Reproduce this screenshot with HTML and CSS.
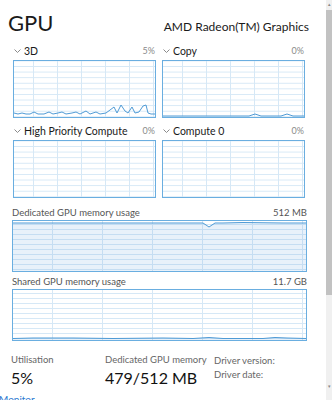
FILE: index.html
```html
<!DOCTYPE html>
<html lang="en">
  <head>
    <meta charset="UTF-8" />
    <title>GPU</title>
    <link rel="stylesheet" href="styles.css">
  </head>
  <body>
    <div class="window">
      <div class="page">
        <div class="head">
          <h1 class="title">GPU</h1>
          <span class="adapter">AMD Radeon(TM) Graphics</span>
        </div>

        <!-- engine graphs -->
        <div class="engines">
          <div class="engine">
            <div class="engine-head">
              <span class="engine-name"><svg class="chev" viewBox="0 0 7 4"><path d="M0.5 0.5 L3.5 3.5 L6.5 0.5" /></svg>3D</span>
              <span class="pct">5%</span>
            </div>
            <div class="chart">
              <svg class="plot" viewBox="0 0 141 56" preserveAspectRatio="none">
                <polyline points="0,52 4,53 8,52 12,53 16,53 20,51 24,53 30,53 35,51 39,53 44,52 48,51 52,53 58,52 62,51 66,53 72,50 76,53 82,51 86,53 92,52 96,49 100,46 103,52 107,44 111,50 114,52 118,46 121,52 125,51 129,45 132,44 134,52 137,53 141,53" />
              </svg>
            </div>
          </div>
          <div class="engine">
            <div class="engine-head">
              <span class="engine-name"><svg class="chev" viewBox="0 0 7 4"><path d="M0.5 0.5 L3.5 3.5 L6.5 0.5" /></svg>Copy</span>
              <span class="pct">0%</span>
            </div>
            <div class="chart">
              <svg class="plot" viewBox="0 0 141 56" preserveAspectRatio="none">
                <polyline points="0,55 86,55 89,54 92,53 95,54 98,55 118,55 121,54 124,53 127,54 130,55 141,55" />
              </svg>
            </div>
          </div>
          <div class="engine">
            <div class="engine-head">
              <span class="engine-name"><svg class="chev" viewBox="0 0 7 4"><path d="M0.5 0.5 L3.5 3.5 L6.5 0.5" /></svg>High Priority Compute</span>
              <span class="pct">0%</span>
            </div>
            <div class="chart"></div>
          </div>
          <div class="engine">
            <div class="engine-head">
              <span class="engine-name"><svg class="chev" viewBox="0 0 7 4"><path d="M0.5 0.5 L3.5 3.5 L6.5 0.5" /></svg>Compute 0</span>
              <span class="pct">0%</span>
            </div>
            <div class="chart"></div>
          </div>
        </div>

        <!-- memory graphs -->
        <div class="mem">
          <div class="mem-head">
            <span>Dedicated GPU memory usage</span>
            <span>512 MB</span>
          </div>
          <div class="chart wide">
            <svg class="plot" viewBox="0 0 293 50" preserveAspectRatio="none">
              <polygon class="fill" points="0,2 180,2 186,2 190,2 196,6 202,2 210,2 230,1.5 270,2 293,2 293,50 0,50" />
              <polyline points="0,2 180,2 186,2 190,2 196,6 202,2 210,2 230,1.5 270,2 293,2" />
            </svg>
          </div>
        </div>
        <div class="mem">
          <div class="mem-head">
            <span>Shared GPU memory usage</span>
            <span>11.7 GB</span>
          </div>
          <div class="chart wide">
            <svg class="plot" viewBox="0 0 293 50" preserveAspectRatio="none">
              <polygon class="fill" points="0,48.5 20,48 60,48 100,48.5 150,48 180,48.5 196,47.5 210,48.5 250,48.5 262,47.5 274,48 293,48.5 293,50 0,50" />
              <polyline points="0,48.5 20,48 60,48 100,48.5 150,48 180,48.5 196,47.5 210,48.5 250,48.5 262,47.5 274,48 293,48.5" />
            </svg>
          </div>
        </div>

        <!-- stats -->
        <div class="stats">
          <div class="stat">
            <span class="stat-label">Utilisation</span>
            <span class="stat-value">5%</span>
          </div>
          <div class="stat">
            <span class="stat-label">Dedicated GPU memory</span>
            <span class="stat-value">479/512 MB</span>
          </div>
          <div class="driver">
            <span>Driver version:</span>
            <span>Driver date:</span>
          </div>
        </div>
        <a class="monitor">Monitor</a>
      </div>

      <div class="scrollbar">
        <span class="arrow">&#9652;</span>
        <div class="thumb"></div>
        <span class="arrow">&#9662;</span>
      </div>
    </div>
  </body>
</html>
```

FILE: styles.css
```css
body {
  margin: 0;
  padding: 0;
  background-color: #ffffff;
  font-family: Lato, "Open Sans", sans-serif;
  color: #1a1a1a;
  overflow: hidden;
  white-space: nowrap;
}

.window {
  display: flex;
  width: 332px;
  height: 400px;
}

.page {
  flex: 1;
  padding: 8px 0 0 12px;
  overflow: hidden;
}

.head {
  display: flex;
  justify-content: space-between;
  align-items: baseline;
  padding-right: 17px;
  margin-left: -4px;
}

.title {
  margin: 0;
  font-size: 22px;
  font-weight: 400;
  line-height: 30px;
}

.adapter {
  font-size: 12px;
}

.engines {
  display: grid;
  grid-template-columns: 143px 143px;
  column-gap: 6px;
  row-gap: 3px;
  margin-top: 3px;
  padding-left: 1px;
}

.engine-head,
.mem-head {
  display: flex;
  justify-content: space-between;
  align-items: center;
  height: 19px;
}

.engine-name {
  display: flex;
  align-items: center;
  font-size: 10.5px;
}

.chev {
  width: 7px;
  height: 4px;
  margin: 0 3px 0 1px;
}

.chev path {
  fill: none;
  stroke: #8a8a8a;
  stroke-width: 1;
}

.pct {
  font-size: 9px;
  color: #8a8a8a;
  padding-right: 1px;
}

.chart {
  height: 56px;
  border: 1px solid #6aaee0;
  background-color: #ffffff;
  background-image:
    linear-gradient(to right, #d6e8f6 1px, transparent 1px),
    linear-gradient(to bottom, #d6e8f6 1px, transparent 1px);
  background-size: 24px 100%, 100% 5.6px;
  background-position: 19px 0, 0 5px;
}

.chart.wide {
  height: 50px;
  width: 293px;
  background-size: 50px 100%, 100% 5px;
  background-position: 39px 0, 0 3px;
}

.plot {
  display: block;
  width: 100%;
  height: 100%;
}

.plot polyline {
  fill: none;
  stroke: #4f9bd6;
  stroke-width: 1;
}

.plot .fill {
  fill: rgba(110, 170, 225, 0.16);
  stroke: none;
}

.mem {
  margin-top: 6px;
}

.mem + .mem {
  margin-top: 1px;
}

.mem-head {
  font-size: 9.5px;
  color: #555555;
  width: 295px;
  height: 16px;
}

.stats {
  display: flex;
  margin-top: 11px;
  margin-left: -1px;
}

.stat {
  display: flex;
  flex-direction: column;
}

.stat:first-child {
  width: 94px;
}

.stat:nth-child(2) {
  width: 109px;
}

.stat-label {
  font-size: 9.5px;
  color: #666666;
  line-height: 16px;
}

.stat-value {
  font-size: 16px;
  line-height: 20px;
  color: #111111;
}

.driver {
  display: flex;
  flex-direction: column;
  font-size: 9.5px;
  color: #666666;
  line-height: 14px;
  margin-top: 2px;
}

.monitor {
  display: block;
  margin-left: -13px;
  margin-top: 5px;
  font-size: 10px;
  color: #2a78d0;
}

.scrollbar {
  width: 6px;
  background-color: #f0f0f0;
  display: flex;
  flex-direction: column;
  align-items: center;
}

.arrow {
  font-size: 5px;
  color: #888888;
  line-height: 8px;
}

.thumb {
  width: 6px;
  height: 285px;
  margin-top: 2px;
  background-color: #c2c2c2;
}

.scrollbar .arrow:last-child {
  margin-top: auto;
  margin-bottom: 10px;
}
```
